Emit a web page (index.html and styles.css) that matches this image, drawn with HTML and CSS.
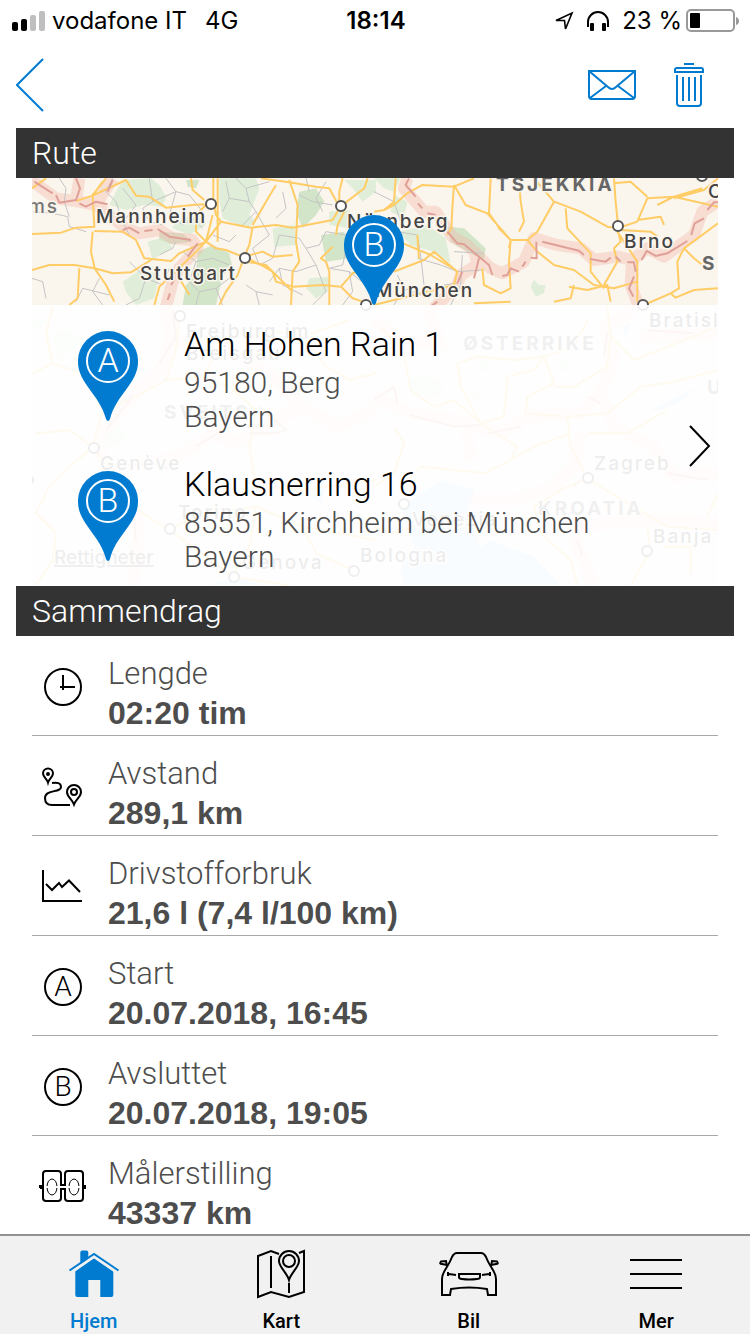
FILE: index.html
```html
<!DOCTYPE html>
<html lang="no">
<head>
    <meta charset="UTF-8">
    <meta name="viewport" content="width=device-width, initial-scale=1.0">
    <title>Rute</title>
    <link rel="stylesheet" href="styles.css">
</head>
<body>
    <div class="status-bar">
        <div class="status-left">
            <svg class="signal" width="34" height="20" viewBox="0 0 34 20">
                <rect x="0" y="11" width="6" height="9" rx="2"/>
                <rect x="9" y="8" width="6" height="12" rx="2"/>
                <rect x="18" y="4" width="6" height="16" rx="2" fill="#bfbfbf"/>
                <rect x="27" y="0" width="6" height="20" rx="2" fill="#bfbfbf"/>
            </svg>
            <span class="carrier">vodafone IT</span>
            <span>4G</span>
        </div>
        <div class="status-time">18:14</div>
        <div class="status-right">
            <svg width="20" height="20" viewBox="0 0 20 20" fill="none" stroke="#000" stroke-width="1.6">
                <path d="M2 9.500L18 2L11.500 18L10.500 9.500z"/>
            </svg>
            <svg width="24" height="22" viewBox="0 0 24 22">
                <path d="M2 17V12a10 10 0 0 1 20 0v5" fill="none" stroke="#000" stroke-width="2"/>
                <rect x="4" y="13" width="4" height="8" rx="1"/>
                <rect x="16" y="13" width="4" height="8" rx="1"/>
            </svg>
            <span class="battery-level">23 %</span>
            <svg width="54" height="24" viewBox="0 0 54 24">
                <rect x="1" y="1" width="47" height="21" rx="4" fill="none" stroke="#999" stroke-width="2"/>
                <rect x="4" y="4" width="10" height="15" rx="1"/>
                <path d="M50 8q3 1 3 4t-3 4z" fill="#999"/>
            </svg>
        </div>
    </div>

    <header class="toolbar">
        <button class="icon-btn" aria-label="Tilbake">
            <svg width="28" height="54" viewBox="0 0 28 54"><path d="M27 1L1 27L27 53"/></svg>
        </button>
        <div class="toolbar-actions">
            <button class="icon-btn" aria-label="Send">
                <svg width="48" height="30" viewBox="0 0 48 30">
                    <path d="M1 1H47V26a3 3 0 0 1-3 3H4a3 3 0 0 1-3-3zM1 1L20 17q4 4 8 0L47 1M2 28L18 16M46 28L30 16"/>
                </svg>
            </button>
            <button class="icon-btn" aria-label="Slett">
                <svg width="30" height="44" viewBox="0 0 30 44">
                    <path d="M10 1H20M1 9V7a2 2 0 0 1 2-2H27a2 2 0 0 1 2 2V9zM3 12V40a3 3 0 0 0 3 3H24a3 3 0 0 0 3-3V12M9 14V38M15 14V38M21 14V38"/>
                </svg>
            </button>
        </div>
    </header>

    <main>
        <section>
            <h2 class="section-title">Rute</h2>
            <div class="map">
                <svg class="map-canvas" viewBox="0 0 686 408" preserveAspectRatio="xMidYMin slice" aria-hidden="true">
                    <defs>
                        <symbol id="pin" viewBox="0 0 60 90">
                            <path d="M30 0A30 30 0 0 0 0 31C0 52 22 64 28 88q2 4 4 0C38 64 60 52 60 31A30 30 0 0 0 30 0z" fill="#007bd0"/>
                            <circle cx="30" cy="30" r="21" fill="none" stroke="#fff" stroke-width="2"/>
                        </symbol>
                    </defs>
                    <rect width="686" height="408" fill="#faf5ed"/>

                    <!-- upper left: Mannheim, Stuttgart, Nürnberg -->
                    <g transform="translate(-16 -53) scale(.3333)">
                        <g class="wood">
                            <path d="M320 165L405 160L430 180L450 215L440 245L385 240L330 255L280 240L300 200z"/>
                            <path d="M610 160L720 160L730 190L700 270L720 290L690 310L620 280L610 230z"/>
                            <path d="M770 310L835 300L840 360L775 365z"/>
                            <path d="M480 285L560 265L570 300L520 330L470 310z"/>
                            <path d="M395 350L450 335L470 370L430 390L410 405z"/>
                            <path d="M320 470L380 430L430 450L415 520L360 540L330 500z"/>
                            <path d="M880 460L940 455L935 500L900 520L870 490z"/>
                            <path d="M985 165L1080 165L1080 200L1040 230L1010 190z"/>
                            <path d="M940 260L1000 255L1000 310L940 300z"/>
                        </g>
                        <g class="wood dark">
                            <path d="M545 380L590 360L640 385L650 430L620 450L600 540L500 540L510 480L540 450z"/>
                            <path d="M850 200L900 190L925 230L900 270L860 310L840 260z"/>
                            <path d="M915 330L985 320L1000 400L930 410z"/>
                            <path d="M430 320L500 325L530 350L470 358L430 345z"/>
                            <path d="M510 165L550 165L540 190L515 185z"/>
                        </g>
                        <path class="frontier" d="M45 165L120 220L180 228L190 160M180 228L240 240L290 160M240 240L330 310L370 325L430 315L470 340L530 345L545 370L490 430L470 470L450 545"/>
                        <path class="minor" d="M48 260L110 265L155 275L160 305L210 320M130 160L150 190L145 230L160 275M290 160L270 200L300 230L320 290L340 330M320 190L360 240L330 280M400 160L410 230L380 250L400 290L440 300M410 230L480 200L520 210L560 260M450 160L480 200L460 270L500 300L530 280L560 310M630 170L640 220L700 230L720 260L680 300M660 160L690 190L760 170M640 220L620 260M690 190L700 230M720 260L760 330L710 370L730 420L770 400L790 330L850 340L870 370L910 360L930 320L990 330M850 210L890 230L950 240M870 370L900 420L840 440L790 430L760 470M900 420L930 500L890 540M940 430L1000 440L1050 480M1000 440L1010 500L980 540M1050 380L1040 440L1050 480L1080 500M500 380L540 410L590 400L640 420M540 410L520 470L550 500L600 490L640 460M600 490L620 540M550 500L540 540M340 410L390 460L440 480L460 430M390 460L370 520L330 540M48 460L80 470L90 520M180 530L200 490L280 510M430 390L470 370L480 350M690 480L720 500L730 540M720 500L770 510M790 430L800 480L860 510M870 160L880 200M1000 330L980 420L940 430M250 460L230 500L260 540M930 170L900 220L920 260M800 200L810 250L780 280M590 330L640 350L660 330"/>
                        <path class="major" d="M48 190L90 160M48 327L135 323L180 308L235 305L230 210L270 160M180 228L230 212L260 170M230 212L330 165L360 212L400 215L450 248L530 240L565 238M235 318L320 320L360 345L385 400L465 408L490 385L570 350L590 270M230 320L225 380L236 430L175 420L100 420L48 435M236 430L270 480L295 530M236 430L290 445L345 442L405 405M190 430L185 520L160 540M525 160L530 195L565 225M592 160V230L600 270M605 160V350M570 350L540 320L540 270L570 240M600 270L615 290L705 308L780 300L830 308L950 285L973 245L1045 190L1055 160M615 290L570 350L600 370L630 375L680 395M710 305L700 360L685 395L665 450L630 500L610 540M685 395L740 380L770 395L830 390M685 395L735 420L770 440L780 470L830 485L920 480L975 485L1010 445L1060 430M690 410L750 420L800 470L830 500M735 160L820 172L900 185L940 190L970 245M820 165L845 240L840 350L850 410L830 440L825 540M780 180L750 230L710 300M970 245L970 200L980 160M975 485L1010 520L1040 530M930 410L940 440V540M930 410L915 400L950 365M570 350L520 400L430 485L415 540M490 460L520 510M960 330L965 300L985 260"/>
                        <path class="frontier-line" d="M55 170L110 205M120 210L130 233L180 225L192 190L180 160M190 235L210 245L240 230L275 238M290 165L275 200M320 315L340 308L370 325M385 318L410 315M425 312L460 335L525 345M545 355L515 395M465 480L475 465M455 525L462 505"/>
                    </g>

                    <!-- upper right: Tsjekkia, Brno -->
                    <g transform="translate(342 -53) scale(.3333)">
                        <g class="wood">
                            <path d="M0 160L80 160L60 200L30 190z"/>
                            <path d="M60 210L100 230L90 280L50 260z"/>
                            <path d="M75 320L160 300L215 340L230 415L180 380L110 360z"/>
                            <path d="M470 485L480 465L495 480L515 480L510 505L485 515z"/>
                        </g>
                        <path class="wood dark" d="M220 305L270 310L335 370L330 405L280 380L230 350z"/>
                        <path class="frontier" d="M100 160L90 190L150 260L185 260L235 335L280 360L350 430L385 445L450 410L480 340L550 360L620 370L660 405L730 395L775 405L820 370L870 395L960 330L985 260L1032 230M300 370L310 420L260 450L250 480L180 550M775 405L770 480L795 545"/>
                        <path class="minor" d="M0 200L60 230L80 290M20 280L70 320L130 330L140 390L150 480M70 320L60 380L0 400M130 400L200 420L250 440L330 435M240 380L330 385M265 390L260 480L230 540M210 480L250 475M60 540L90 490L70 450M90 490L140 510"/>
                        <path class="major" d="M65 160L60 230L30 255L0 260M30 255L60 240L100 205L145 180L240 185L300 160M240 180L235 250L232 310L220 330M240 180L275 240L340 265L410 345L405 410L410 490L380 505L330 480L325 430M410 345L460 345L490 320L540 230L620 260L700 305L730 310L790 290L820 220L900 215L985 190M350 160L345 265L370 300L375 310L410 345M435 160L440 230L450 290L435 320M480 160L540 230M575 250L580 310L650 385V440L690 490M460 345L490 380L540 420L600 435L660 480L720 490L790 470M730 310L740 350L720 370L730 410L690 480M730 320L790 410L790 530M720 160L725 230L732 300M720 175L770 170L820 215M850 240L900 215L1032 245M790 285L860 275L870 300M740 315L830 320L850 335M1032 160L990 195L900 220M930 370L910 410L915 490L890 505L810 540M930 370L960 400L985 420M930 370L1032 295M890 505L905 518L960 495L1032 490M410 345L405 370M585 485L640 495L700 480L710 530M600 480L590 520L540 530M60 440L150 405L180 380L250 440L240 480L0 540M0 330L75 350L170 390L245 435M130 330L135 400M300 535L410 530"/>
                        <path class="frontier-line" d="M105 160L95 180L125 215M132 235L145 250M160 265L185 270M220 320L250 355L270 358L345 420L355 450M315 400L300 460M265 440L250 475M190 530L170 545M385 453L400 450L410 430L435 440M445 425L455 410M470 398L488 400L487 350M505 350L615 377L630 390M648 402L695 410L710 398M725 395L740 410M760 412L780 412L785 440M780 455L765 490L778 515M803 405L818 378L845 393L880 385L940 348M952 330L962 295L990 280M1000 255L1020 232L1032 232"/>
                    </g>

                    <!-- lower left: Sveits -->
                    <g transform="translate(-16 122) scale(.3333)">
                        <path class="wood" d="M110 100L160 90L200 130L130 180zM100 60L60 100L48 60zM770 240L850 230L900 270L820 290zM260 400L320 380L330 420L280 440z"/>
                        <path class="water" d="M300 310L360 275L350 290L310 320zM680 245L720 225L700 250zM890 590L930 560L915 610zM590 850L680 835L740 856H590z"/>
                        <path class="frontier" d="M450 20L460 120L440 200L350 290L260 400L240 440L300 520L340 560L370 700L350 856M460 120L640 150L760 220L860 320L760 370L660 430L590 400L490 470L320 500M860 320L960 380L1080 330"/>
                        <path class="major" d="M48 220L110 190L200 220L260 330L230 440L160 500L100 560L60 640L120 700L110 780L60 856M110 190L90 100L110 20M260 330L340 300L450 240L560 230L640 260L720 330L700 440L720 560L860 570L1080 540M490 50L480 150L450 240M560 230L610 140L700 80L860 110L1000 60M460 690L560 640L720 620L860 680L1080 720M460 690L380 640L230 440M460 690L530 740L650 830M720 620L700 740L650 830L820 856M930 200L1000 240L1080 220M930 200L860 110M860 680L900 760L1010 810M60 400L160 390L230 440"/>
                        <path class="frontier-line" d="M470 30L480 110L430 190M350 290L270 390M300 500L390 490L480 510M730 320L810 390L780 400L700 400M620 390L540 440M350 610L360 720"/>
                    </g>

                    <!-- lower right: Østerrike, Kroatia -->
                    <g transform="translate(342 122) scale(.3333)">
                        <path class="wood" d="M100 240L150 225L215 250L190 290L110 280zM315 190L340 180L360 210L320 215zM550 200L580 180L595 205L560 215zM280 290L310 280L315 305z"/>
                        <path class="water" d="M80 620L200 540L300 570L280 640L320 740L350 720L400 740L480 770L560 856H90L80 800L120 740zM830 330L960 265L930 300L860 330zM745 80L770 70L755 115z"/>
                        <path class="frontier" d="M160 20L200 130L80 120L0 60M0 290L110 340L250 360L380 400L460 350L620 340L680 280L720 170L690 80L780 30M690 300L720 380L840 440L900 530L1032 520M620 400L600 500L540 560L420 600L290 600M290 480L280 390M600 680L800 660L1032 670M600 700L620 760L660 856M800 110L1032 100"/>
                        <path class="major" d="M20 80L90 160L110 270L180 320L240 300L320 370L390 350L400 230L480 210L510 170L540 250L460 290L455 340L580 350L700 340L800 260L900 245L1032 210M250 190L310 170L420 180L510 170L600 140L640 60M250 190L260 260L320 370L430 440L410 480L330 520L240 510L140 500L100 540M580 350L590 440L640 535L760 610L880 680L1032 690M590 400L480 440L410 480M640 535L560 570L480 620L500 700L590 780L610 856M700 20L710 110L780 180L1032 80M710 110L700 200L600 260L540 260M880 330L760 400L640 400M820 680L830 750L770 856M870 740L950 740L950 820M0 680L60 700L120 680M60 380L90 430L60 520L0 560M1032 580L1000 650"/>
                        <path class="frontier-line" d="M0 300L60 260L70 310M110 345L240 380L320 375M340 400L440 380M640 290L680 310M690 170L700 100M620 540L600 560M880 520L1000 540M610 720L625 770M820 90L960 100"/>
                    </g>

                    <g class="city">
                        <circle cx="179" cy="26" r="5"/><circle cx="309" cy="28" r="5"/><circle cx="213" cy="80" r="5"/>
                        <circle cx="334" cy="127" r="5"/><circle cx="586" cy="48" r="5"/><circle cx="611" cy="127" r="5"/>
                        <circle cx="670" cy="-2" r="5"/><circle cx="148" cy="138" r="5"/><circle cx="62" cy="270" r="5"/>
                        <circle cx="138" cy="351" r="5"/><circle cx="202" cy="399" r="5"/><circle cx="322" cy="393" r="5"/>
                        <circle cx="372" cy="326" r="5"/><circle cx="556" cy="300" r="5"/><circle cx="615" cy="373" r="5"/>
                        <circle cx="-4" cy="302" r="5"/>
                    </g>
                    <g class="place">
                        <text class="faded" x="27" y="35" text-anchor="end">Worms</text>
                        <text x="64" y="45">Mannheim</text>
                        <text x="108" y="102">Stuttgart</text>
                        <text x="315" y="50">Nürnberg</text>
                        <text x="343" y="119">München</text>
                        <text x="592" y="70">Brno</text>
                        <text x="676" y="20">Ostrava</text>
                        <text x="154" y="160">Freiburg im</text>
                        <text x="154" y="182">Breisgau</text>
                        <text x="617" y="149">Bratislava</text>
                        <text x="68" y="292">Genève</text>
                        <text x="146" y="341">Torino</text>
                        <text x="210" y="391">Genova</text>
                        <text x="328" y="384">Bologna</text>
                        <text x="380" y="348">Venezia</text>
                        <text x="562" y="292">Zagreb</text>
                        <text x="621" y="365">Banja Luka</text>
                    </g>
                    <g class="country">
                        <text x="464" y="13">TSJEKKIA</text>
                        <text x="670" y="92">SLOVAKIA</text>
                        <text x="431" y="172">ØSTERRIKE</text>
                        <text x="132" y="241">SVEITS</text>
                        <text x="675" y="216">UNGARN</text>
                        <text x="506" y="337">KROATIA</text>
                    </g>
                    <text class="legal" x="22" y="386">Rettigheter</text>
                    <use href="#pin" x="312" y="37" width="60" height="90"/>
                    <text class="pin-letter" x="342" y="78">B</text>
                </svg>

                <a class="route-link" href="#">
                    <span class="stops">
                        <span class="stop">
                            <svg class="stop-pin" width="60" height="90" viewBox="0 0 60 90">
                                <use href="#pin" width="60" height="90"/>
                                <text class="pin-letter" x="30" y="41">A</text>
                            </svg>
                            <span class="stop-text">
                                <span class="street">Am Hohen Rain 1</span>
                                <span class="place-line">95180, Berg</span>
                                <span class="place-line">Bayern</span>
                            </span>
                        </span>
                        <span class="stop">
                            <svg class="stop-pin" width="60" height="90" viewBox="0 0 60 90">
                                <use href="#pin" width="60" height="90"/>
                                <text class="pin-letter" x="30" y="41">B</text>
                            </svg>
                            <span class="stop-text">
                                <span class="street">Klausnerring 16</span>
                                <span class="place-line">85551, Kirchheim bei München</span>
                                <span class="place-line">Bayern</span>
                            </span>
                        </span>
                    </span>
                    <svg class="chevron" width="22" height="42" viewBox="0 0 22 42"><path d="M1 1L20 21L1 41"/></svg>
                </a>
            </div>
        </section>

        <section>
            <h2 class="section-title">Sammendrag</h2>
            <ul class="summary">
                <li class="row">
                    <svg class="row-icon" viewBox="0 0 48 48">
                        <circle cx="25" cy="25" r="18"/><path d="M25 13V28M22 25H37"/>
                    </svg>
                    <div>
                        <div class="label">Lengde</div>
                        <div class="value">02:20 tim</div>
                    </div>
                </li>
                <li class="row">
                    <svg class="row-icon" viewBox="0 0 48 48">
                        <path d="M10 20.500C9 17 5 15 5 11.500a5 5 0 0 1 10 0C15 15 11 17 10 20.500z"/>
                        <circle cx="10" cy="12" r="1" fill="#000"/>
                        <path d="M14 21C19 20 23 21 23 25C23 31 7 27 7 36C7 41 10 43 14 43H32"/>
                        <path d="M36 42.500C34 37 29 35 29 30a7 7 0 0 1 14 0C43 35 38 37 36 42.500z"/>
                        <circle cx="36" cy="30" r="3"/>
                    </svg>
                    <div>
                        <div class="label">Avstand</div>
                        <div class="value">289,1 km</div>
                    </div>
                </li>
                <li class="row">
                    <svg class="row-icon" viewBox="0 0 48 48">
                        <path d="M5 8V39H44M8 22L14 28L21 21L24 25L31 18.500L42 30"/>
                    </svg>
                    <div>
                        <div class="label">Drivstofforbruk</div>
                        <div class="value">21,6 l (7,4 l/100 km)</div>
                    </div>
                </li>
                <li class="row">
                    <svg class="row-icon" viewBox="0 0 48 48">
                        <circle cx="25" cy="25" r="18"/><text class="icon-letter" x="25" y="34">A</text>
                    </svg>
                    <div>
                        <div class="label">Start</div>
                        <div class="value">20.07.2018, 16:45</div>
                    </div>
                </li>
                <li class="row">
                    <svg class="row-icon" viewBox="0 0 48 48">
                        <circle cx="25" cy="25" r="18"/><text class="icon-letter" x="25" y="34">B</text>
                    </svg>
                    <div>
                        <div class="label">Avsluttet</div>
                        <div class="value">20.07.2018, 19:05</div>
                    </div>
                </li>
                <li class="row">
                    <svg class="row-icon" viewBox="0 0 48 48">
                        <path d="M2 26V24H5V12a3 3 0 0 1 3-3H20a3 3 0 0 1 3 3V23H27V12a3 3 0 0 1 3-3H42a3 3 0 0 1 3 3V24H48M2 26H5V36a3 3 0 0 0 3 3H20a3 3 0 0 0 3-3V27H27V36a3 3 0 0 0 3 3H42a3 3 0 0 0 3-3V26H48"/>
                        <g stroke-width="1"><ellipse cx="14" cy="25" rx="5" ry="8"/><ellipse cx="36" cy="25" rx="5" ry="8"/></g>
                        <path d="M7 25H21M29 25H43" stroke="#fff"/>
                    </svg>
                    <div>
                        <div class="label">Målerstilling</div>
                        <div class="value">43337 km</div>
                    </div>
                </li>
            </ul>
        </section>
    </main>

    <nav class="tab-bar">
        <a class="tab active" href="#">
            <svg width="60" height="56" viewBox="0 0 60 56">
                <path d="M16.300 20V6.500a2 2 0 0 1 2-2h4a2 2 0 0 1 2 2V14zM11.300 25L30 12L49.300 25V49a2 2 0 0 1-2 2H36.300V34H24.300V51H13.300a2 2 0 0 1-2-2z" fill="#007bd0"/>
                <path d="M9 25L30 10.500L51 25" fill="none" stroke="#f1f1f1" stroke-width="3"/>
                <path d="M5.500 24.500L30 8L54.500 24.500" fill="none" stroke="#007bd0" stroke-width="2"/>
            </svg>
            <span>Hjem</span>
        </a>
        <a class="tab" href="#">
            <svg width="60" height="56" viewBox="0 0 60 56" fill="none" stroke="#000" stroke-width="2">
                <path d="M28 8L20 5L7 10V51L20 46L38 51L53 46V5L48 7M20 10V42M38 37V47"/>
                <path d="M38 34C36 27 28 21 28 15a10 10 0 0 1 20 0C48 21 40 27 38 34z"/>
                <circle cx="38" cy="15" r="6"/>
            </svg>
            <span>Kart</span>
        </a>
        <a class="tab" href="#">
            <svg width="60" height="56" viewBox="0 0 60 56" fill="none" stroke="#000" stroke-width="2">
                <path d="M3 49V33C3 25 9 22 13 11Q15 7 18 7H42Q45 7 47 11C51 22 57 25 57 33V49H49L48 43Q30 40 12 43L11 49z"/>
                <path d="M8 20L7 15L2 15.500Q0 18 3 18L8 19M52 20L53 15L58 15.500Q60 18 57 18L52 19"/>
                <path d="M20 28H41V31Q41 33 38 33Q30 34 23 33Q20 33 20 31z"/>
                <path d="M9 26V30M10 28L17 29M51 26V30M50 28L43 29"/>
            </svg>
            <span>Bil</span>
        </a>
        <a class="tab" href="#">
            <svg width="60" height="56" viewBox="0 0 60 56" stroke="#000" stroke-width="2">
                <path d="M4 14H56M4 28H56M4 42H56"/>
            </svg>
            <span>Mer</span>
        </a>
    </nav>
</body>
</html>
```
FILE: styles.css
```css
* {
    box-sizing: border-box;
}
body {
    margin: 0;
    min-height: 100vh;
    display: flex;
    flex-direction: column;
    background: #fff;
    color: #000;
    font-family: Roboto, 'Liberation Sans', sans-serif;
}
svg {
    display: block;
    flex-shrink: 0;
}

/* status bar */
.status-bar {
    display: grid;
    grid-template-columns: 1fr auto 1fr;
    align-items: center;
    height: 42px;
    padding: 0 10px 0 12px;
    font-family: Inter, 'Liberation Sans', sans-serif;
    font-size: 24px;
    line-height: 40px;
}
.status-left,
.status-right {
    display: flex;
    align-items: center;
}
.signal {
    margin-right: 6px;
}
.carrier {
    margin-right: 18px;
}
.status-time {
    font-weight: 600;
}
.status-right {
    justify-content: flex-end;
    gap: 12px;
}
.battery-level {
    margin-right: -8px;
}

/* toolbar */
.toolbar {
    display: flex;
    align-items: center;
    justify-content: space-between;
    height: 86px;
    padding: 0 46px 0 16px;
}
.toolbar-actions {
    display: flex;
    align-items: center;
    gap: 38px;
}
.icon-btn {
    padding: 0;
    border: none;
    background: none;
    cursor: pointer;
}
.icon-btn svg {
    fill: none;
    stroke: #007bd0;
    stroke-width: 2;
}

.section-title {
    margin: 0 16px;
    padding: 1px 16px 0;
    background: #333;
    color: #fff;
    font-size: 32px;
    font-weight: 300;
    line-height: 49px;
}

/* map */
.map {
    position: relative;
    margin: 0 32px;
    padding-top: 127px;
    overflow: hidden;
}
.map-canvas {
    position: absolute;
    top: 0;
    left: 0;
    width: 100%;
    height: 100%;
    font-family: Inter, 'Liberation Sans', sans-serif;
}
.wood {
    fill: #e0eed9;
}
.dark {
    fill: #d3e5c8;
}
.water {
    fill: #b5dcf5;
}
.frontier,
.frontier-line,
.minor,
.major {
    fill: none;
    stroke-linejoin: round;
}
.frontier {
    stroke: #f4b8ac;
    stroke-opacity: 0.4;
    stroke-width: 36;
}
.frontier-line {
    stroke: #e0a097;
    stroke-width: 6;
}
.minor {
    stroke: #c4c4c6;
    stroke-width: 3;
}
.major {
    stroke: #ffcc66;
    stroke-width: 6;
}
.city {
    fill: #fff;
    stroke: #555;
    stroke-width: 2;
}
.place,
.country {
    fill: #444;
    stroke: #faf5ed;
    stroke-width: 3px;
    paint-order: stroke;
    font-size: 19px;
    font-weight: 500;
    letter-spacing: 2px;
}
.faded {
    fill: #777;
}
.country {
    fill: #666;
    font-weight: 700;
    letter-spacing: 3px;
}
.legal {
    fill: #555;
    font-size: 19px;
    font-weight: 500;
    text-decoration: underline;
}
.pin-letter {
    fill: #fff;
    font-family: Roboto, 'Liberation Sans', sans-serif;
    font-size: 34px;
    font-weight: 300;
    text-anchor: middle;
}
.route-link {
    position: relative;
    display: flex;
    align-items: center;
    justify-content: space-between;
    padding: 1px 7px 0 0;
    background: rgba(255, 255, 255, 0.9);
    color: #000;
    text-decoration: none;
}
.stops,
.stop-text,
.street,
.place-line {
    display: block;
}
.stop {
    display: flex;
    align-items: center;
    gap: 46px;
    padding: 12px 0 12px 46px;
}
.stop-text {
    padding-top: 4px;
}
.street {
    font-size: 34px;
    font-weight: 300;
    line-height: 44px;
}
.place-line {
    color: #4d4d4d;
    font-size: 30px;
    font-weight: 300;
    line-height: 34px;
}
.chevron {
    fill: none;
    stroke: #000;
    stroke-width: 2;
}

/* summary list */
.summary {
    margin: 0 32px;
    padding: 0;
    list-style: none;
}
.row {
    display: flex;
    gap: 22px;
    padding: 19px 0 2px 6px;
    border-bottom: 1px solid #aaa;
}
.row:last-child {
    padding-bottom: 1px;
    border-bottom: none;
}
.row-icon {
    width: 48px;
    height: 48px;
    margin-top: 7px;
    overflow: visible;
    fill: none;
    stroke: #000;
    stroke-width: 2;
}
.icon-letter {
    fill: #000;
    stroke: none;
    font-size: 28px;
    font-weight: 300;
    text-anchor: middle;
}
.label,
.value {
    color: #4d4d4d;
}
.label {
    font-size: 31px;
    font-weight: 300;
    line-height: 38px;
}
.value {
    font-family: 'Liberation Sans', Arial, sans-serif;
    font-size: 32px;
    font-weight: bold;
    line-height: 40px;
}

/* tab bar */
.tab-bar {
    position: sticky;
    bottom: 0;
    display: flex;
    margin-top: auto;
    border-top: 2px solid #929292;
    background: #f1f1f1;
}
.tab {
    flex: 1;
    display: flex;
    flex-direction: column;
    align-items: center;
    gap: 7px;
    padding: 10px 0 1px;
    color: #000;
    font-size: 20px;
    font-weight: 500;
    line-height: 24px;
    text-decoration: none;
}
.tab.active {
    color: #007bd0;
}
```
